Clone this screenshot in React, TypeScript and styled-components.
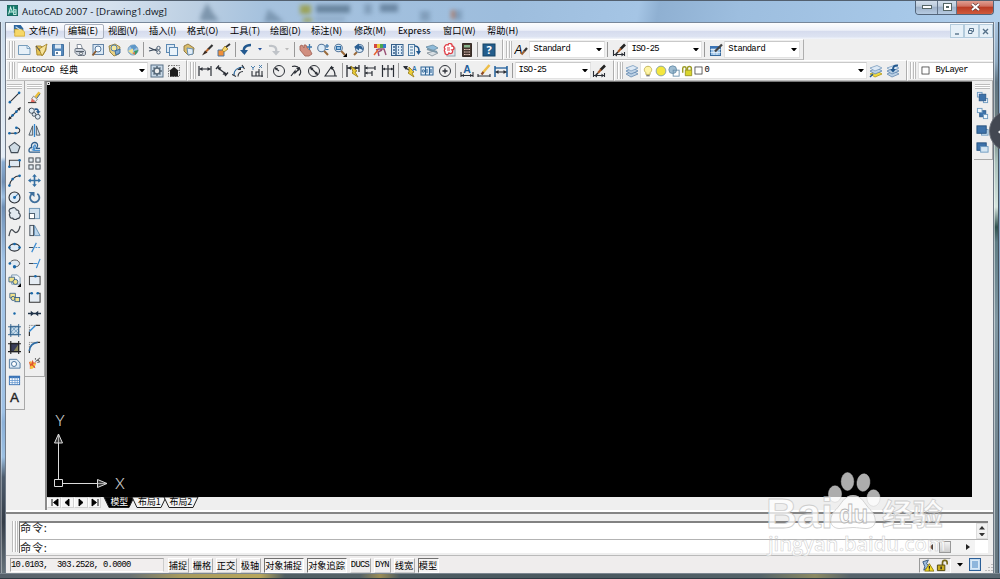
import React from 'react';
import styled, { createGlobalStyle, css } from 'styled-components';

const Global = createGlobalStyle`
  * { box-sizing: border-box; }
  body { margin: 0; background: #9dbbd8; overflow: hidden; }
`;

const SANS = `"Noto Sans", "Noto Sans CJK SC", sans-serif`;
const MONO = `"Liberation Mono", "Noto Sans CJK SC", monospace`;

/* ---------- window frame ---------- */

const Window = styled.div`
  position: relative;
  width: 1000px;
  height: 579px;
  overflow: hidden;
  display: flex;
  flex-direction: column;
  font-family: ${SANS};
  color: #000;
  background: linear-gradient(#9dbcdc 0, #a4c2e0 60px, #a4c2e0 100%);
  border-top: 1px solid #53606f;
`;

const TitleBar = styled.div`
  height: 21px;
  flex: none;
  position: relative;
  display: flex;
  align-items: flex-start;
  padding: 4px 5px 0 7px;
  overflow: hidden;
  background: linear-gradient(100deg, #d3e2f0 0, #d5e1ee 110px, #bdd0e3 190px, #a6c2de 260px, #9dbddd 500px, #a5c5e5 630px, #8fb0d2 650px, #9dbedf 730px, #a7c8e8 900px, #b3d0ec 100%);
`;

const Smudges = styled.svg`
  position: absolute;
  left: 180px;
  top: 0;
  filter: blur(2.2px);
`;

const TitleText = styled.span`
  position: relative;
  margin-left: 4px;
  font: 9.75px/13px "Open Sans", sans-serif;
  color: #10161e;
`;

const CaptionButtons = styled.div`
  display: flex;
  margin: -5px 1px 0 auto;
  height: 15px;
  border: 1px solid #53657a;
  border-top: 0;
  border-radius: 0 0 4px 4px;
  overflow: hidden;
  position: relative;
`;

const CaptionButton = styled.div<{ $w: number; $close?: boolean }>`
  width: ${p => p.$w}px;
  border-right: ${p => (p.$close ? '0' : '1px solid #63758a')};
  background: ${p => (p.$close
    ? 'linear-gradient(#e3a79b 0, #d0705f 45%, #b93b24 50%, #cf5a3c 100%)'
    : 'linear-gradient(#d6e2ee 0, #bccbdc 45%, #9db0c7 50%, #b6cbe2 100%)')};
  display: flex;
  align-items: center;
  justify-content: center;
`;

const Middle = styled.div`
  flex: 1;
  display: flex;
  min-height: 0;
`;

const LeftEdge = styled.div`
  width: 6px;
  flex: none;
  background: linear-gradient(90deg, #5c6470 0 1px, rgba(255,255,255,.35) 1px 2px, transparent 2px 5px, #717b88 5px),
    linear-gradient(#c9daea 0, #dde8f2 90px, #e4edf6 135px, #8aaed4 140px, #7190b5 160px, #9cbfe2 175px, #6e8fb5 185px, #a3c5e8 240px, #9ec1e5 390px, #8cb1d8 400px, #9cc0e2 435px, #4d5c6d 455px, #343c47 500px, #67737b 100%);
`;

const RightEdge = styled.div`
  width: 7px;
  flex: none;
  background: linear-gradient(90deg, #6e7884 0 1px, rgba(255,255,255,.5) 1px 2px, transparent 2px 5px, #46525e 5px 6px, #8ba9ca 6px),
    linear-gradient(#a9c4df 0, #8fabc2 40px, #5f7483 60px, #6f827f 110px, #a9c1bb 140px, #d5e5df 185px, #2e504e 205px, #5f7d85 220px, #8097a2 300px, #71848e 440px, #63747d 100%);
`;

const BottomEdge = styled.div`
  height: 6px;
  flex: none;
  border-top: 1px solid #7c8790;
  border-bottom: 1px solid #2f3942;
  background: linear-gradient(90deg, #56606a 0, #6a7274 130px, #a79a5e 180px, #b8a75c 260px, #4f5d62 285px, #566368 360px, #9a8c55 380px, #4c5b61 400px, #4a5960 600px, #55646a 760px, #8c8a62 815px, #56636b 850px, #5a6871 100%);
`;

const Client = styled.div`
  flex: 1;
  min-width: 0;
  display: flex;
  flex-direction: column;
  background: #efefef;
  border-top: 1px solid #77879a;
`;

/* ---------- menu ---------- */

const MenuBar = styled.div`
  height: 16px;
  flex: none;
  display: flex;
  align-items: center;
  padding-left: 3px;
  background: linear-gradient(#fcfdfe 0, #eef1f9 45%, #d6dcee 52%, #dde3f2 85%, #f3f5fa 100%);
`;

const MenuItem = styled.div<{ $w: number; $hot?: boolean }>`
  position: relative;
  z-index: 0;
  width: ${p => p.$w}px;
  height: 14px;
  flex: none;
  font: 9.2px/13px "Noto Sans CJK SC", sans-serif;
  white-space: nowrap;
  color: #000;
  ${p => p.$hot && css`
    &::before {
      content: '';
      position: absolute;
      z-index: -1;
      left: -4px;
      top: 0;
      width: 38px;
      height: 13px;
      border: 1px solid #a9b0bd;
      border-radius: 2px;
      background: rgba(255, 255, 255, .35);
    }
  `}
`;

const MdiButtons = styled.div`
  margin-left: auto;
  display: flex;
  height: 14px;
`;

const MdiButton = styled.div`
  width: 14.4px;
  border: 1px solid #b3cbdc;
  background: #e6f0f8;
  display: flex;
  align-items: center;
  justify-content: center;
`;

/* ---------- toolbars ---------- */

const ToolRow = styled.div`
  height: 21px;
  flex: none;
  display: flex;
`;

const ToolBar = styled.div<{ $w: number; $open?: boolean }>`
  width: ${p => p.$w}px;
  flex: none;
  display: flex;
  align-items: center;
  overflow: hidden;
  border-top: 1px solid #fff;
  border-left: 1px solid #fff;
  border-right: ${p => (p.$open ? '0' : '1px solid #aeaeae')};
  border-bottom: 1px solid #bdbdbd;
`;

const Grip = styled.div<{ $gap?: number; $h?: number }>`
  width: 6px;
  height: ${p => p.$h ?? 17}px;
  flex: none;
  margin: 0 ${p => p.$gap ?? 2}px 0 2px;
  border: solid #bcbcbc;
  border-width: 0 1px;
  background: linear-gradient(90deg, #fff 0 1px, #efefef 1px 2px, #bcbcbc 2px 3px, #fff 3px);
`;

const Slot = styled.div<{ $w?: number }>`
  width: ${p => p.$w ?? 17.4}px;
  flex: none;
  display: flex;
  align-items: center;
  justify-content: center;
`;

const Sep = styled.div`
  width: 1px;
  height: 15px;
  flex: none;
  margin: 0 1.8px;
  background: #999;
`;

const Combo = styled.div<{ $w: number; $pad?: number }>`
  width: ${p => p.$w}px;
  height: 17px;
  flex: none;
  display: flex;
  align-items: center;
  gap: 1px;
  padding: 0 2px 0 ${p => p.$pad ?? 3}px;
  background: #fff;
  border: 1px solid #e2e2e2;
  border-top-color: #c9c9c9;
  font: 9.1px/14px ${MONO};
  white-space: pre;
`;

const ComboArrow = styled.span`
  margin-left: auto;
  display: flex;
`;

const Latin = styled.span`
  font: 8.8px/13px "Liberation Mono", monospace;
  letter-spacing: -0.68px;
  white-space: pre;
`;

/* ---------- work area ---------- */

const Work = styled.div`
  flex: 1;
  display: flex;
  min-height: 0;
`;

const Palette = styled.div<{ $w: number; $h: number }>`
  width: ${p => p.$w}px;
  height: ${p => p.$h}px;
  flex: none;
  display: flex;
  flex-direction: column;
  align-items: center;
  border-right: 1px solid #a9a9a9;
  border-bottom: 1px solid #a9a9a9;
  padding-right: 1px;
`;

const PaletteGrip = styled.div`
  width: 15px;
  height: 5px;
  flex: none;
  margin: 3px 0 0;
  border: solid #bdbdbd;
  border-width: 1px 0;
  background: linear-gradient(#fff 0 1px, #c4c4c4 1px 2px, #fff 2px);
`;

const PaletteSlot = styled.div`
  height: 16.67px;
  flex: none;
  display: flex;
  align-items: center;
`;

const Document = styled.div`
  width: 928px;
  margin-left: auto;
  display: flex;
  flex-direction: column;
  border-left: 2px solid #8b8b8b;
  border-top: 1px solid #777;
`;

const Canvas = styled.div`
  height: 415px;
  flex: none;
  background: #000;
`;

const LayoutBar = styled.div`
  flex: 1;
  display: flex;
  align-items: flex-start;
`;

const NavButton = styled.div`
  width: 13.6px;
  height: 11px;
  display: flex;
  align-items: center;
  justify-content: center;
  border: 1px solid #d2d2d2;
  border-left-color: #fff;
  background: #f6f6f6;
`;

const LayoutTab = styled.div<{ $w: number; $active?: boolean }>`
  position: relative;
  width: ${p => p.$w}px;
  height: 12px;
  font: 8.9px/10px "Noto Sans CJK SC", sans-serif;
  text-align: center;
  white-space: nowrap;
  color: ${p => (p.$active ? '#fff' : '#000')};
  & > svg { position: absolute; left: -2px; top: 0; }
  & > span { position: relative; }
`;

const RightDock = styled.div`
  width: 21px;
  flex: none;
  padding-left: 2px;
`;

/* ---------- command window & status ---------- */

const CommandArea = styled.div`
  height: 43px;
  flex: none;
  display: flex;
  padding: 7px 5px 2px 4px;
  border-top: 2px solid #858585;
  box-shadow: 0 -2px 0 #fff;
`;

const CommandBox = styled.div`
  flex: 1;
  border-left: 1px solid #777;
  border-top: 2px solid #828282;
  background: #fff;
  display: flex;
  flex-direction: column;
`;

const CommandLine = styled.div<{ $h: number; $rule?: boolean }>`
  height: ${p => p.$h}px;
  display: flex;
  align-items: ${p => (p.$rule ? 'flex-start' : 'center')};
  font: 11.2px/${p => (p.$rule ? 8 : 12)}px "Noto Sans CJK SC", sans-serif;
  border-bottom: ${p => (p.$rule ? '1px solid #b3b3b3' : '0')};
`;

const Prompt = styled.span`
  letter-spacing: 0.7px;
  color: #222;
`;

const VScroll = styled.div`
  width: 12px;
  height: 16px;
  margin-left: auto;
  background: #f1f1f1;
  border: 1px solid #ddd;
  display: flex;
  flex-direction: column;
  justify-content: space-around;
  align-items: center;
`;

const HScroll = styled.div`
  display: flex;
  align-items: center;
  justify-content: space-between;
  width: 46px;
  height: 13px;
  margin: 0 13px 0 auto;
  padding-right: 5px;
  background: #f3f3f3;
`;

const Thumb = styled.div`
  width: 12px;
  height: 12px;
  margin-right: 10px;
  border: 1px solid #999;
  background: linear-gradient(#f4f4f4, #ccc);
`;

const StatusBar = styled.div`
  height: 18px;
  flex: none;
  display: flex;
  align-items: center;
  padding: 1px 0 0 4px;
  background: #efeded;
  border-top: 1px solid #bababa;
`;

const Coords = styled.div`
  width: 154px;
  height: 14px;
  margin-right: 3.5px;
  border: 1px solid #a5a5a5;
  border-right-color: #ccc;
  border-bottom-color: #fff;
  background: #f1eeee;
  display: flex;
`;

const Toggle = styled.div<{ $w: number; $on?: boolean }>`
  width: ${p => p.$w}px;
  height: 15px;
  flex: none;
  margin-right: 3px;
  display: flex;
  justify-content: center;
  font: 9.2px/13px "Noto Sans CJK SC", sans-serif;
  white-space: nowrap;
  border: 1px solid;
  border-color: ${p => (p.$on ? '#707070 #fff #fff #707070' : '#fff #aaa #ccc #fff')};
  background: ${p => (p.$on ? '#f5f4f4' : 'transparent')};
`;

const Tray = styled.div`
  width: 32px;
  height: 15px;
  margin-left: auto;
  display: flex;
  align-items: center;
  justify-content: space-around;
  border: 1px solid #999;
  border-right-color: #fff;
  border-bottom-color: #fff;
`;

const SideHandle = styled.div`
  position: absolute;
  left: 989px;
  top: 109px;
  width: 42px;
  height: 42px;
  border-radius: 50%;
  background: #434852;
  border: 1px solid #6b7079;
`;

const Watermark = styled.svg`
  position: absolute;
  left: 760px;
  top: 464px;
`;

/* ---------- icons (14 × 14 grid) ---------- */

const K = '#2b2f36';
const B = '#2f6fa8';
const line = (d: string, c = K, w = 1.1) => <path d={d} fill="none" stroke={c} strokeWidth={w} />;
const fill = (d: string, c: string, s = 'none') => <path d={d} fill={c} stroke={s} strokeWidth={0.9} />;
const dot = (x: number, y: number, r = 1.4, c = '#1767a9') => <circle cx={x} cy={y} r={r} fill={c} />;
const box = (x: number, y: number, w: number, h: number, f = '#fff', s = B) => (
  <rect x={x} y={y} width={w} height={h} fill={f} stroke={s} strokeWidth={1} />
);
const lens = (c = '#dcebf7') => <><circle cx="5.5" cy="5" r="3.8" fill={c} stroke="#56779b" strokeWidth="1.1" />{line('M8.2 8 12 12', '#9a6a3a', 2)}</>;
const dimline = (y: number) => <>{line(`M1.5 ${y}H12.5`)}{fill(`M1.5 ${y}l3-2v4z M12.5 ${y}l-3-2v4z`, K)}</>;
const sheets = (c: string, s = '#7393b5') => <>
  {fill('M1 10 8 7 13 10 6 13z', c, s)}{fill('M1 7 8 4 13 7 6 10z', '#bcd0e4', '#6a8fb5')}{fill('M1 4 8 1.500 13 4 6 7z', '#dde9f5', '#86a5c4')}
</>;

const ICONS: Record<string, React.ReactNode> = {
  app: <>{box(0.5, 0.5, 13, 13, '#147a6c', '#0e6055')}{line('M2 12 4.500 3 7 9M8.500 2v10h3V6H8.500M2 9h9', '#cdeee6', 1.3)}{line('M2 5 11 10', '#6fd0bb', 0.9)}</>,
  doc: <>{fill('M1 0h8l3 4v5H1z', '#2b66a0')}{fill('M2 5h8l3.500 3v5H2z', '#f6d768', '#d3a72c')}{line('M3 2 9 6', '#c9e1f3', 1.300)}</>,
  new: <>{fill('M1.500 2.500h9l2.500 2.500v6.500H1.500z', '#e6f0f8', '#6a93b5')}{line('M10 2.500v3h3', '#6a93b5', 0.8)}</>,
  open: <>{fill('M2 3h5l1 1h4v3L9 12H3z', '#e6c455', '#a5842a')}{fill('M5 6 13 1 11 8 8 13z', '#f6e39b', '#a5842a')}{line('M2 3 6 8', '#555')}</>,
  save: <>{fill('M1.500 1.500h11v11h-11z', '#5688ba', '#356898')}{fill('M4 1.500h6v4H4z', '#dfeaf4')}{fill('M4 8h6v4.500H4z', '#fff')}{line('M5 10h2', '#357', 1.5)}</>,
  print: <>{fill('M4 1.500h4l1.500 4.500H4.500z', '#fff', '#7d8794')}{fill('M2 6.500q0-1 1-1h6q3 1 3.500 3v3q-1 1.500-3 1H5L2 9.500z', '#d1d8e0', '#5d6875')}{line('M3 8.500h8', '#56606c')}<circle cx="8" cy="10.500" r="1.500" fill="#eee" stroke="#5d6875" /></>,
  preview: <>{box(2, 1.5, 10.500, 10, '#dbe9f5', '#6383a5')}<circle cx="7" cy="6" r="3" fill="#f4faff" stroke="#56779b" />{line('M5 8 1.500 12.500', '#8d5d32', 2)}</>,
  publish: <>{fill('M1 3l6-2 5 3-1 7-5 2-4-4z', '#ebd182', '#8d7d3d')}<circle cx="6" cy="5" r="3" fill="#f3e9a0" stroke="#4f7fb0" />{fill('M7 8l5-2v4l-4 2z', '#7aa6d0', '#356898')}</>,
  dwf: <><circle cx="7" cy="7" r="5" fill="#9cc4e2" stroke="#7fa3c2" />{fill('M4 3 9 1.500l2 3-4 3z', '#5f98c8')}{fill('M8 8l4.500-1-3 5z', '#3b9a62')}{fill('M2 8 7 5.500v6z', '#f2e490')}{fill('M6 10l3-1v3z', '#d07c4a')}</>,
  cut: <>{line('M1 4.500 9 8M1 8 9 6', '#39485a', 1.1)}<circle cx="10.500" cy="5" r="1.700" fill="none" stroke="#4b5f75" /><circle cx="10.500" cy="9.300" r="1.700" fill="none" stroke="#4b5f75" /></>,
  copy: <>{box(1.500, 1.500, 8, 8, '#dce9f5', '#5c89b2')}{box(4.500, 4.500, 8, 8, '#eaf3fa', '#5c89b2')}</>,
  paste: <>{fill('M2 3 6 1l6 4-1 6-5 1-4-4z', '#d9bd6c', '#8c733a')}{fill('M5 5l6 1v5l-5 1z', '#e3eef8', '#5c89b2')}</>,
  brush: <>{line('M12.500 2 8 6.500', '#333', 2.200)}{line('M8.500 6 6 8.500', '#b9652a', 2)}{fill('M2 12.500 5 7.500 7.500 9.500z', '#3a2a20')}</>,
  block: <>{fill('M1 7h6v6H1z', '#ef8f39', '#3f6fa5')}{fill('M5 7l3-4 3 3-4 3z', '#f6d76b', '#a5842a')}{line('M9 4 13 1', '#333', 1.8)}</>,
  undo: <>{line('M12 2C6 2 4 5 5 10', '#23598f', 2.4)}{fill('M1 7h8l-3.500 5z', '#23598f')}</>,
  redo: <>{line('M2 3c6-1 8 2 7 6', '#bfc3c8', 2.200)}{fill('M5 8h8l-4 4.500z', '#bfc3c8')}</>,
  pan: <>{fill('M1 3l2-1 2 3 0-3 2 0 1 3 3 2 2 4-3 2H6L1 7z', '#d18f80', '#a5665a')}{line('M10.500 1v6M8 4h5', '#3f78ac', 1.300)}</>,
  zoomRt: <>{lens()}{line('M9 3h4M11 1v4M9.500 6.500h3', B)}</>,
  zoomWin: <>{lens()}{box(3.5, 3.500, 4, 3, '#9bc2e4')}{fill('M14 10v4h-4z', '#000')}</>,
  zoomPrev: <>{line('M3 12 6 9', '#9a6a3a', 2)}<circle cx="8.500" cy="5.500" r="4" fill="#dcebf7" stroke="#56779b" strokeWidth="1.100" />{fill('M3 4l5-3.500v2q4 0 4 5-2-2-4-2v2z', '#2c6094')}</>,
  props: <>{fill('M1 1h3v4H1z', '#d5483f')}{fill('M4 1h3v4H4z', '#e8c93c')}{fill('M7 1h3v4H7z', '#4aa552')}{fill('M10 1h3v4h-3z', '#3979c9')}{line('M3 7 6 6l5 0 2 6M9 7l-4 2 1 4', '#9a4f75', 1.400)}{line('M1 12l4-5', '#e9622c', 1.500)}</>,
  design: <>{box(1.500, 1.500, 11.500, 11, '#dcebf8', '#355f8a')}{line('M6 1v12M3 4h2M3 7h2M3 10h2M8 4h1M11 4h1M8 7h1M11 7h1M8 10h1M11 10h1', '#355f8a', 1.400)}</>,
  tool: <>{box(1.500, 1.500, 6, 11, '#e6f0f8', '#4b789f')}{line('M3 4h3M3 7h3M3 10h3', '#4b789f')}{line('M8 3c4 0 4 3 4 7', '#23598f', 1.600)}{fill('M9 8h5l-2.500 4z', '#23598f')}</>,
  sheet: <>{fill('M1 4l7-2 5 3-6 3z', '#8fbbd9', '#6d91a8')}{fill('M2 10l7-2 4 2-6 3z', '#d9dfe3', '#88949c')}{line('M2 6l10 3', '#7b97a8', 2)}</>,
  markup: <>{box(5, 5, 8, 8, '#dfe5ea', '#93a1ad')}<path d="M3 3a2 2 0 0 1 3-1 2 2 0 0 1 4 1 2 2 0 0 1 0 4 2 2 0 0 1-3 3 2 2 0 0 1-4-1 2 2 0 0 1 0-3 2 2 0 0 1 0-3z" fill="#fff" stroke="#df3e46" strokeWidth="1.300" />{line('M5 5h3M5 7h3', '#df3e46')}</>,
  calc: <>{fill('M2.500 .5h9v13h-9z', '#45372f', '#291f1a')}{fill('M4 2h6v2.500H4z', '#88b48c')}{line('M4 6.500h6M4 9h6M4 11.500h6', '#e7c6bf', 1.200)}{line('M6 5v8M8 5v8', '#45372f', 0.700)}</>,
  help: <>{box(1, 1, 12, 12, '#235d8c', '#174567')}<text x="7" y="11" textAnchor="middle" fontSize="11" fontWeight="700" fontFamily="Open Sans" fill="#fff">?</text></>,
  textstyle: <><text x="0.5" y="10.5" fontSize="12" fontStyle="italic" fontFamily="Liberation Sans">A</text>{line('M13 5 10 8.500', '#333', 2.200)}{line('M10.500 8 7.500 11.500', '#9b6237', 2)}</>,
  dimstyle: <>{line('M1.500 7v6M12.500 9v4M1 11.500h12', K)}{fill('M2 11.500l3-2v4zM12 11.500l-2.500-2v4z', K)}{line('M13 1.500 8.500 6', '#222', 2.600)}{line('M9 5.500 6 9', '#a45827', 2)}{line('M6 9 4.500 10.500', '#222', 1.500)}</>,
  tablestyle: <>{box(1.500, 3.500, 10, 9, '#9cc3e8', '#376a9e')}{line('M1.500 6.500h10M1.500 9.500h10M5 6v6M8 6v6', '#e7f1fa', 0.800)}{fill('M1 3h11v2.500H1z', '#3a73b5')}{line('M13 1.500 6 8.500', '#444', 2.300)}</>,
  gear: <>{box(1, 1, 12, 12, '#c9d9e7', '#566f85')}{line('M7 2v10M2 7h10M3.500 3.500l7 7M10.500 3.500l-7 7', '#566878', 1.500)}<circle cx="7" cy="7" r="3" fill="#eee" stroke="#566878" strokeWidth="1.600" /></>,
  home: <><rect x="1.500" y="1.500" width="11" height="11" fill="none" stroke="#777" strokeDasharray="1.500 1" />{fill('M2 7l5-4 5 4h-1v5.500H3V7z', '#1d1d1d')}</>,
  dLinear: <>{line('M1 2v10M13 2v10', K, 1.200)}{dimline(5)}</>,
  dAligned: <>{line('M3 4 11 10M1 5l3-3.500M10 12l3-3.500', K, 1.300)}{fill('M3 3l3.500.5-2.500 3zM11 11l-3.500-.5 2.500-3z', K)}</>,
  dArc: <>{line('M2 11C2 6 6 3 12 3', '#1d5f9a', 1.200)}{line('M6 12.500c0-3 2-5 5-5M0 10.500l4 2M10 1l2.500 4', K)}{fill('M5 6l4-3 0 3z', K)}</>,
  dOrd: <>{line('M2 7v5h11M6 12V8h3M9 5v7M12 7v6', K)}{line('M1 2l2 2 2-2M3 4v2M9 1l3 3M12 1 9 4', '#3a73a5', 0.900)}</>,
  dRadius: <><circle cx="7" cy="7" r="5.500" fill="none" stroke={K} />{line('M7 7 3 4', K)}{fill('M2.500 3.500l3.500.5-2 2.500z', K)}</>,
  dJog: <>{line('M3 2.500c7-2 11 5 7 9', K, 1.100)}{line('M2 12l4-5 0 2 5-5', K, 1.200)}{fill('M11 3l-4 1 3 3z', K)}</>,
  dDia: <><circle cx="7" cy="7" r="5.500" fill="none" stroke={K} />{line('M3 3l8 8', K)}{fill('M3 3l3.500 1-2.500 2.500zM11 11l-3.500-1 2.500-2.500z', K)}</>,
  dAng: <>{line('M13 12H1L8 2M7 4c3 1 4 4 4 8', K, 1.200)}{fill('M6 3l4 0-2 3z', K)}</>,
  dQuick: <>{line('M1 1v12M13 1v7M1 4h12', K, 1.300)}{fill('M2 4l3-2v4zM12 4 9 2v4z', K)}{fill('M5 2l6 5-2 1 3 5-6-4 1-1z', '#efcf35', '#98801e')}</>,
  dBase: <>{line('M2 1v12M12 2v4M9 7v5M2 4h10M2 9h7', K, 1.200)}{fill('M2 4l2.500-1.500v3zM2 9l2.500-1.500v3z', K)}</>,
  dCont: <>{line('M1.500 1v12M7 1v12M12.500 1v12M1.500 5h11', K, 1.200)}{fill('M2 5l2-1.500v3zM12 5l-2-1.500v3z', K)}</>,
  leader: <>{line('M1 3l5 3', K, 1.300)}{fill('M0 2l5 0-2 4z', K)}{fill('M6 3l5 5-2 1 2 4-6-4 1-1z', '#efcf35', '#98801e')}<text x="9" y="6.5" fontSize="6.500" fontWeight="700" fontFamily="Liberation Sans" fill={B}>A</text></>,
  tol: <>{box(1, 3, 12, 8, '#e3effa', '#2e6496')}{line('M5.500 3v8M9.500 3v8M11 5v4', '#2e6496')}<circle cx="3.300" cy="7" r="1.200" fill="none" stroke="#2e6496" />{line('M7 5v4', '#2e6496')}</>,
  center: <><circle cx="7" cy="7" r="5.500" fill="none" stroke={K} />{line('M4.500 7h5M7 4.500v5', K, 1.300)}</>,
  dEdit: <><text x="7" y="9" textAnchor="middle" fontSize="10.500" fontWeight="700" fontFamily="Liberation Sans" fill="#1f5f9c">A</text>{line('M1 8v5M13 8v5M1 11.500h12', K)}{fill('M1 11.500l3-1.500v3zM13 11.500l-3-1.500v3z', K)}</>,
  dTextEdit: <>{line('M1 12h12M1 10v3M13 10v3', K)}{line('M12.500 1 6 8.500', '#edbd48', 2.500)}{line('M6.500 8 4.500 10.500', '#8d4925', 2.200)}</>,
  dUpdate: <>{line('M1 2v11M13 2v11', '#1f5f9c', 1.500)}{line('M1 4h12', '#1f5f9c', 1.300)}{dimline(8)}</>,
  layers: sheets('#b9cfe4'),
  layerPrev: <>{sheets('#b9cfe4')}{line('M12 1.500C8 1 7 3 7 6', '#23598f', 2)}{fill('M4 5h6L7 8.500z', '#23598f')}</>,
  layerMake: <>{sheets('#f0d93c', '#b89f22')}{line('M1 13l3-3', '#23598f', 1.500)}</>,
  bulb: <>{fill('M4.500 9C1 6 3 1.500 7 1.500S13 6 9.500 9v2h-5z', '#fff5a6', '#b5a540')}{line('M5 12.500h4', '#777', 1.500)}</>,
  sun: <><circle cx="7" cy="7" r="5.700" fill="#f4e63d" stroke="#7d9cac" /></>,
  vp: <><circle cx="5.500" cy="5.500" r="4.500" fill="#9fbdd2" stroke="#668ca8" />{box(6, 6, 7, 7, 'none', '#668ca8')}</>,
  unlock: <>{line('M2 9V4a2 2 0 0 1 4 0v2', '#9b9b25', 1.700)}{fill('M5 6h7.500v6.500H5z', '#d9d52c', '#8b8717')}{line('M7.500 6V4a2.300 2.300 0 0 1 4.600 0v2', '#9b9b25', 1.700)}</>,
  swatch: box(1.5, 1.500, 11, 11, '#fff', '#111'),
  /* draw palette */
  line: <>{line('M2 12 12 2')}{dot(2, 12)}{dot(12, 2)}</>,
  xline: <>{line('M1 13 13 1')}{fill('M0 14l1.500-4 2.500 2.500zM14 0l-4 1.500L12.500 4z', K)}{dot(5, 9)}{dot(9, 5)}</>,
  pline: <>{line('M1 10h7c6 0 6-6 1-6')}{dot(1.500, 10)}{dot(8, 10)}{dot(9, 4)}</>,
  polygon: <path d="M7 1.500 12.800 6l-2.300 6.500h-7L1.200 6z" fill="#cfdbe4" stroke="#414b55" strokeWidth="1.200" />,
  rect: <>{box(1.500, 3.500, 11, 7, '#dfe9f2', '#333')}{dot(1.500, 10.500)}{dot(12.500, 3.500)}</>,
  arc: <>{line('M1.500 12.500C2 7 7 2 12.500 2')}{dot(1.500, 12.500)}{dot(5, 5.500)}{dot(12.500, 2)}</>,
  circle: <><circle cx="7" cy="7" r="5.900" fill="#e0ebf5" stroke={K} strokeWidth="1.200" />{line('M7 7l3.500-3.500', B)}{dot(7, 7, 1.600)}</>,
  cloud: <path d="M2.500 6.500A2.700 2.700 0 0 1 4 1.500a3 3 0 0 1 5 1.500 2.500 2.500 0 0 1 2.500 3.500 3.200 3.200 0 0 1-1.500 6A3 3 0 0 1 5 12a2.300 2.300 0 0 1-3-2.500 2 2 0 0 1 .5-3z" fill="#e2eaf1" stroke="#3f4954" strokeWidth="1.300" />,
  spline: line('M1 13C3 3 5 6 6.500 8s5 2 6.500-6', '#454b52', 1.300),
  ellipse: <><ellipse cx="7" cy="7" rx="5.500" ry="3.800" fill="#e0ebf5" stroke={K} strokeWidth="1.300" />{dot(1.500, 7)}{dot(12.500, 7)}{dot(7, 3.200)}</>,
  ellArc: <>{fill('M2 7C3 2 12 2 12.500 7 12 10 10 10.500 7 10.500', '#dfe9f2', '#444')}{dot(2, 7)}{dot(7, 10.500, 1.800)}</>,
  insBlock: <>{fill('M4 1h6l3 3v7H4z', '#eef4f9', '#6a8aa8')}{fill('M1 3.500h6v5H1z', '#f0e28b', '#38628a')}<circle cx="8" cy="8.500" r="2.700" fill="#f0e28b" stroke="#38628a" />{fill('M14 10v4h-4z', '#000')}</>,
  mkBlock: <>{fill('M2 2.500h6v5H2z', '#f0e28b', '#38628a')}<circle cx="5.500" cy="8" r="2.200" fill="#f0e28b" stroke="#38628a" />{box(7.500, 7, 5, 4.500, '#f0e28b', '#38628a')}</>,
  point: dot(7, 7, 1.300),
  hatch: <>{box(2.500, 2.500, 9, 9, '#c9dceb', '#35648f')}{line('M2 6l4-4M2 10l8-8M4 12l8-8M8 12l4-4M3 8l4 4M5 4l6 6', '#6493b8', 0.800)}{line('M0 3h14M0 11.500h14M3 0v14M11.500 0v14', '#35648f', 1)}</>,
  gradient: <>{box(2.500, 2.500, 9, 9, '#3a3d59', '#222')}{fill('M6 11l5-7v7z', '#8b8757')}{line('M0 3h14M0 11.500h14M3 0v14M11.500 0v14', '#222', 1.200)}</>,
  region: <>{fill('M1.500 2.500h8l3.500 4v5.500H1.500z', '#dceaf5', '#3e6b95')}<circle cx="6.500" cy="7.500" r="2.700" fill="#fff" stroke="#3e6b95" /></>,
  table: <>{box(1.500, 2.500, 11, 9, '#fff', '#3a73b5')}{fill('M1 2h12v2.500H1z', '#3a73b5')}{line('M1 7h12M1 9.300h12M4.500 3v8M7.500 3v8M10 3v8', '#5e93cd', 0.800)}</>,
  mtext: <text x="7" y="12" textAnchor="middle" fontSize="14.500" fontFamily="Liberation Sans" fill="#222" stroke="#222" strokeWidth=".4">A</text>,
  /* modify palette */
  erase: <>{line('M12.500 1.500 8 7', '#e9bd3c', 3)}{line('M13 3 9.500 8', '#3568a0', 1)}{fill('M6 5.500l4 3.500-2 2.500-4-3z', '#f3f3f3', '#777')}{fill('M4 8l3.500 3-1 1.500H3z', '#e4685e')}{line('M0 12.500h9', '#333')}</>,
  dup: <><circle cx="4" cy="4" r="2.800" fill="#dfe9f2" stroke="#3d4b5a" /><circle cx="6.500" cy="8" r="2" fill="#dfe9f2" stroke="#3d4b5a" /><circle cx="10.500" cy="10.500" r="2.600" fill="#dfe9f2" stroke="#3d4b5a" />{line('M7 2.500c4-1 4 1 4 3', '#23598f', 1.800)}{fill('M8.500 4.500H13.500L11 7.500z', '#23598f')}</>,
  mirror: <>{fill('M5 2v10H1z', '#d5dfe7', '#3f4a55')}{fill('M9 2v10h4z', '#d5dfe7', '#3f4a55')}{line('M7 0v14', '#2f86d0', 1.400)}</>,
  offset: <>{line('M1.500 12h11.500M1.500 12C0 8 3 7 4 7 2 0 12 0 10 6l-1 2h4', '#2e5d8a', 1.400)}{line('M4 9.500h2C5 4 8.500 3 8 5.500L6.500 10H13', '#4a93d3', 1.300)}</>,
  array: <>{box(1, 1, 4.500, 4.500, '#e4ecf2', '#3c444d')}{box(8.500, 1, 4.500, 4.500, '#e4ecf2', '#3c444d')}{box(1, 8.500, 4.500, 4.500, '#e4ecf2', '#3c444d')}{box(8.500, 8.500, 4.500, 4.500, '#e4ecf2', '#3c444d')}</>,
  move: <>{line('M7 2v10M2 7h10', '#346fa2', 1.700)}{fill('M7 0l2.500 3h-5zM7 14l2.500-3h-5zM0 7l3-2.500v5zM14 7l-3-2.500v5z', '#346fa2')}</>,
  rotate: <>{line('M4.500 3a5 5 0 1 0 5.500 0', '#3f6f9c', 2)}{fill('M0.500 1h6.500v5.500z', '#3f6f9c')}</>,
  scale: <>{box(1.500, 1.500, 11, 11, '#cfe0ee', '#6b93b5')}{box(1.500, 7, 5.500, 5.500, '#fff', '#44596b')}</>,
  stretch: <>{box(2, 1.500, 4, 11, '#e3eaf0', '#3f4a55')}{fill('M7 1.500 13 12.500H7z', '#bcd6ec', '#5a87ad')}</>,
  trim: <>{line('M1 7h5', '#3f4a55')}{line('M4 12 9 2', '#3a8ad0', 1.300)}<path d="M8 7h6" stroke="#3a8ad0" strokeDasharray="2 1" /></>,
  extend: <>{line('M1 7h5', '#3f4a55')}{line('M6 7h4', '#3a8ad0')}{line('M9 12l4-10', '#3a8ad0', 1.300)}</>,
  breakPt: <>{box(1.500, 2.500, 11.500, 9, '#e5ecf3', '#333')}{dot(8, 2.500)}</>,
  breakIt: <>{fill('M1.500 2.500v9.500H13V2.500', '#e5ecf3')}{line('M4 2.500H1.500v9.500H13V2.500h-2.500', '#333')}{dot(4, 2.500)}{dot(10.500, 2.500)}</>,
  join: <>{line('M0 7h14', '#1f3248', 1.600)}{fill('M6.500 7 3 4v6zM7.500 7 11 4v6z', '#1f3248')}</>,
  chamfer: <>{line('M1.500 13V8M8 1.500h5', '#333', 1.300)}{line('M1.500 8 8 1.500', '#2e86d0', 1.500)}<path d="M1.500 7V1.500H8" fill="none" stroke="#777" strokeDasharray="1.500 1" /></>,
  fillet: <>{line('M1.500 13V10M10 1.500h3', '#333', 1.300)}{line('M1.500 10.500C2 5 5 2 10.500 1.500', '#2e6ca5', 1.900)}<path d="M1.500 7V1.500H7" fill="none" stroke="#777" strokeDasharray="1.500 1" /></>,
  explode: <>{fill('M1 5l3 1 1-3 1 3 3 0-2 3 1 3-3-1-3 2 0-4z', '#e2522e')}{dot(4, 11, 1.800, '#f3c73c')}{dot(3, 6, 1.300, '#f3a93c')}{dot(7, 8, 1.400, '#f3c73c')}{line('M8 5l5-4M10 6l3-1M8 3V1M11 2l1 3', '#666')}</>,
  /* draw order */
  front: <>{box(1.500, 1.500, 5, 5, '#eef', '#6f9bc0')}{box(8, 8, 4.500, 4.500, '#fff', '#6f9bc0')}{box(3.500, 3.500, 7, 7, '#3d72aa', '#2f5d8c')}</>,
  back: <>{box(4, 4, 6.500, 6.500, '#3d72aa', '#2f5d8c')}{box(1.500, 1.500, 5, 4.500, '#eef5fb', '#6f9bc0')}{box(8, 8, 4.500, 4.500, '#eef5fb', '#6f9bc0')}</>,
  above: <>{box(6, 6, 7, 6, '#d5e6f3', '#6f9bc0')}{box(1, 2, 10, 8, '#3d72aa', '#25527f')}</>,
  under: <>{box(1, 2, 10, 8, '#3d72aa', '#25527f')}{box(5, 6, 8, 6, '#d5e6f3', '#6f9bc0')}</>,
};

const Icon = ({ n, s = 14 }: { n: string; s?: number }) => (
  <svg width={s} height={s} viewBox="0 0 14 14" style={{ flex: 'none' }}>{ICONS[n]}</svg>
);

const Arrow = ({ c = '#000', s = 6 }: { c?: string; s?: number }) => (
  <svg width={s} height={s / 2 + 0.5} viewBox="0 0 6 3.5"><path d="M0 0h6L3 3.500z" fill={c} /></svg>
);

const Drop = () => <ComboArrow><Arrow /></ComboArrow>;

const Tools = ({ list }: { list: string }) => (
  <>
    {list.split(' ').map((n, i) => {
      if (n === '|') return <Sep key={i} />;
      if (n === 'v' || n === 'w') return <Slot key={i} $w={10}><Arrow s={4} c={n === 'v' ? '#24519a' : '#bbb'} /></Slot>;
      return <Slot key={i}><Icon n={n} /></Slot>;
    })}
  </>
);

const PaletteTools = ({ list }: { list: string }) => (
  <>
    <PaletteGrip />
    {list.split(' ').map(n => <PaletteSlot key={n}><Icon n={n} s={13} /></PaletteSlot>)}
  </>
);

const MENUS: [string, number][] = [
  ['文件(F)', 39], ['编辑(E)', 40], ['视图(V)', 41], ['插入(I)', 38], ['格式(O)', 43], ['工具(T)', 40],
  ['绘图(D)', 41], ['标注(N)', 43], ['修改(M)', 44], ['Express', 45], ['窗口(W)', 44], ['帮助(H)', 40],
];

const TOGGLES: [string, number, boolean][] = [
  ['捕捉', 21, false], ['栅格', 21, false], ['正交', 21, false], ['极轴', 21, false],
  ['对象捕捉', 40, true], ['对象追踪', 40, true], ['DUCS', 21, false], ['DYN', 17, false], ['线宽', 21, false], ['模型', 21, true],
];

const NAV = ['M3 1v7M9 1v7L4.500 4.500z', 'M7 1v7L3 4.500z', 'M3 1v7l4-3.500z', 'M8 1v7M2 1v7l4.500-3.500z'];

const Ucs = () => (
  <svg width="100" height="415" viewBox="47 82 100 415">
    <g fill="none" stroke="#dcdcdc">
      <rect x="47.500" y="82.500" width="2" height="2" />
      <path d="M54.500 479.500h8v7h-8zM58.500 479V434M63 483.500h44" />
      <path d="M58.500 434l-4 9h8zM107 483.500l-9.500-4v8z" fill="#777" fillOpacity=".5" />
    </g>
    <g fill="#d4d4d4" fontFamily="Lato" fontWeight="300" fontSize="15" textAnchor="middle" stroke="#d4d4d4" strokeWidth=".2">
      <text x="60" y="426">Y</text>
      <text x="120" y="488.500">X</text>
    </g>
  </svg>
);

const TabShape = ({ w, active }: { w: number; active?: boolean }) => (
  <svg width={w + 6} height="12">
    <path d={`M1 0 6 10.500H${w - 1}L${w + 4} 0z`} fill={active ? '#000' : '#f4f4f4'} stroke="#222" />
  </svg>
);

export default function App() {
  return (
    <Window>
      <Global />
      <TitleBar>
        <Smudges width="320" height="21">
          <g fill="#56718b">
            <path d="M21 14l6-12 6 10 6 8H20z" opacity=".6" />
            <path d="M88 8l8 6 8 7H84z" opacity=".5" />
            <rect x="136" y="4" width="34" height="8" opacity=".75" />
            <rect x="200" y="3" width="18" height="8" opacity=".7" />
            <path d="M184 3h8v10h-8zM240 10h10v10h-10zM275 9h7v10h-7z" opacity=".4" />
            <rect x="135" y="16" width="30" height="4" opacity=".3" />
          </g>
          <path d="M120 4h11v9h-11zM123 17h9v4h-9z" fill="#9aa04c" opacity=".9" />
          <path d="M271 9h4v9h-4z" fill="#b06a4a" opacity=".7" />
        </Smudges>
        <Icon n="app" s={11} />
        <TitleText>AutoCAD 2007 - [Drawing1.dwg]</TitleText>
        <CaptionButtons>
          <CaptionButton $w={22}><svg width="10" height="4"><rect x=".5" y=".5" width="9" height="3" fill="#fff" stroke="#566" /></svg></CaptionButton>
          <CaptionButton $w={19}><svg width="9" height="8"><rect x=".5" y=".5" width="8" height="7" fill="#fff" stroke="#566" /><rect x="3" y="3" width="3" height="2" fill="#566" /></svg></CaptionButton>
          <CaptionButton $w={36} $close>
            <svg width="9" height="8" viewBox="0 0 9 8"><path d="M1 1l7 6M8 1 1 7" stroke="#5d3a3a" strokeWidth="3.200" /><path d="M1 1l7 6M8 1 1 7" stroke="#fff" strokeWidth="1.900" /></svg>
          </CaptionButton>
        </CaptionButtons>
      </TitleBar>

      <Middle>
        <LeftEdge />
        <Client>
          <MenuBar>
            <Slot $w={20}><Icon n="doc" s={12} /></Slot>
            {MENUS.map(([t, w], i) => <MenuItem key={t} $w={w} $hot={i === 1}>{t}</MenuItem>)}
            <MdiButtons>
              <MdiButton><svg width="6" height="7"><path d="M1 6h4" stroke="#55718a" strokeWidth="1.400" /></svg></MdiButton>
              <MdiButton><svg width="8" height="8"><path d="M2.500 3V1.500h4v3H5M1.500 3.500h3.500v3H1.500z" fill="none" stroke="#55718a" /></svg></MdiButton>
              <MdiButton><svg width="7" height="7"><path d="M1 1l5 5M6 1 1 6" stroke="#55718a" strokeWidth="1.400" /></svg></MdiButton>
            </MdiButtons>
          </MenuBar>

          <ToolRow>
            <ToolBar $w={497}>
              <Grip $gap={0} />
              <Tools list="new open save | print preview publish dwf | cut copy paste brush block | undo v redo w | pan zoomRt zoomWin zoomPrev | props design tool sheet markup calc | help" />
            </ToolBar>
            <ToolBar $w={301}>
              <Grip $gap={0} />
              <Slot><Icon n="textstyle" /></Slot>
              <Combo $w={76}><Latin>Standard</Latin><Drop /></Combo>
              <Sep />
              <Slot><Icon n="dimstyle" /></Slot>
              <Combo $w={75}><Latin>ISO-25</Latin><Drop /></Combo>
              <Sep />
              <Slot><Icon n="tablestyle" /></Slot>
              <Combo $w={76}><Latin>Standard</Latin><Drop /></Combo>
            </ToolBar>
          </ToolRow>
          <ToolRow>
            <ToolBar $w={181}>
              <Grip />
              <Combo $w={131} $pad={4}><Latin>AutoCAD </Latin>经典<Drop /></Combo>
              <Tools list="gear home" />
            </ToolBar>
            <ToolBar $w={427}>
              <Grip $gap={0} />
              <Tools list="dLinear dAligned dArc dOrd | dRadius dJog dDia dAng | dQuick dBase dCont | leader tol center | dEdit dTextEdit dUpdate |" />
              <Combo $w={76}><Latin>ISO-25</Latin><Drop /></Combo>
              <Slot><Icon n="dimstyle" /></Slot>
            </ToolBar>
            <ToolBar $w={293}>
              <Grip $gap={0} />
              <Slot><Icon n="layers" /></Slot>
              <Combo $w={227} $pad={1}>
                <Icon n="bulb" s={12} /><Icon n="sun" s={12} /><Icon n="vp" s={12} /><Icon n="unlock" s={12} /><Icon n="swatch" s={9} />
                <Latin>0</Latin><Drop />
              </Combo>
              <Tools list="layerMake layerPrev" />
            </ToolBar>
            <ToolBar $w={86} $open>
              <Grip />
              <Combo $w={76} $pad={2}><Icon n="swatch" s={9} /><Latin> ByLayer</Latin></Combo>
            </ToolBar>
          </ToolRow>

          <Work>
            <Palette $w={19} $h={329}>
              <PaletteTools list="line xline pline polygon rect arc circle cloud spline ellipse ellArc insBlock mkBlock point hatch gradient region table mtext" />
            </Palette>
            <Palette $w={20} $h={296}>
              <PaletteTools list="erase dup mirror offset array move rotate scale stretch trim extend breakPt breakIt join chamfer fillet explode" />
            </Palette>
            <Document>
              <Canvas><Ucs /></Canvas>
              <LayoutBar>
                {NAV.map(d => (
                  <NavButton key={d}><svg width="10" height="9"><path d={d} fill="#000" stroke="#000" strokeWidth=".9" /></svg></NavButton>
                ))}
                <Slot $w={4} />
                <LayoutTab $w={28} $active><TabShape w={27} active /><span>模型</span></LayoutTab>
                <LayoutTab $w={32}><TabShape w={31} /><span>布局1</span></LayoutTab>
                <LayoutTab $w={31}><TabShape w={31} /><span>布局2</span></LayoutTab>
              </LayoutBar>
            </Document>
            <RightDock>
              <Palette $w={19} $h={79}><PaletteTools list="front back above under" /></Palette>
            </RightDock>
          </Work>

          <CommandArea>
            <Grip $gap={1} $h={31} />
            <CommandBox>
              <CommandLine $h={17} $rule><Prompt>命令:</Prompt>
                <VScroll><svg width="6" height="4"><path d="M0 3.500h6L3 0z" fill="#333" /></svg><Arrow c="#333" /></VScroll>
              </CommandLine>
              <CommandLine $h={14}><Prompt>命令:</Prompt>
                <HScroll>
                  <svg width="4" height="6"><path d="M4 0v6L0 3z" fill="#444" /></svg>
                  <Thumb />
                  <svg width="4" height="6"><path d="M0 0v6l4-3z" fill="#222" /></svg>
                </HScroll>
              </CommandLine>
            </CommandBox>
          </CommandArea>

          <StatusBar>
            <Coords><Latin>{'10.0103,  303.2528, 0.0000'}</Latin></Coords>
            {TOGGLES.map(([t, w, on]) => (
              <Toggle key={t} $w={w} $on={on}>{/^[A-Z]/.test(t) ? <Latin>{t}</Latin> : t}</Toggle>
            ))}
            <Tray>
              <svg width="13" height="13" viewBox="0 0 14 14">
                <path d="M2 3l6-2-2 4 3 3-6 4 1-4z" fill="#9dbbdc" stroke="#34557e" />
                <path d="M9 5l5 8H4z" fill="#f4da26" stroke="#8f7c13" /><path d="M9 7.500v3M9 11.300v1" stroke="#222" strokeWidth="1.300" />
              </svg>
              <svg width="13" height="13" viewBox="0 0 14 14">
                <path d="M7 7V4a2.500 2.500 0 0 1 5 0v2" fill="none" stroke="#77691a" strokeWidth="1.800" />
                <path d="M1.500 6.500h8v6h-8z" fill="#c9ad1e" stroke="#4f440c" /><path d="M5.500 8v3" stroke="#222" strokeWidth="1.500" />
              </svg>
            </Tray>
            <Slot $w={17}><Arrow /></Slot>
            <svg width="25" height="15">
              <rect x="1.500" y="0.500" width="11" height="12" fill="#c2daf0" stroke="#2c5f97" />
              <rect x="3.500" y="2.500" width="7" height="8" fill="#8eb6dc" stroke="#d9e9f6" />
              <path d="M24 6v1M24 9v1M24 12v1M21 9v1M21 12v1M18 12v1" stroke="#aaa" strokeWidth="1.500" />
            </svg>
          </StatusBar>
        </Client>
        <RightEdge />
      </Middle>
      <BottomEdge />

      <SideHandle>
        <svg width="11" height="40"><path d="M11 19 8.500 21l2.500 2" fill="#fff" stroke="#fff" strokeWidth=".8" /></svg>
      </SideHandle>

      <Watermark width="195" height="100" viewBox="760 465 195 100">
        <g fill="#fff" fillOpacity=".68" stroke="#c9c9c9" strokeOpacity=".5" strokeWidth=".8">
          <ellipse cx="847.500" cy="481.500" rx="6.300" ry="9" />
          <ellipse cx="863.500" cy="482.500" rx="6.500" ry="8.800" transform="rotate(8 863 482)" />
          <ellipse cx="835" cy="494" rx="6.600" ry="8.300" />
          <ellipse cx="873.500" cy="498" rx="6.600" ry="8.300" />
          <path d="M853 495.500c9 0 11 8 17 14 6 5 9 18-3 19-6 0-9-1-14-1s-9 1-14 1c-12-1-9-14-3-19 6-6 8-14 17-14z" strokeOpacity="1" />
        </g>
        <g fill="#fff" fillOpacity=".75" stroke="#cdcdcd" strokeWidth=".8" fontFamily="Liberation Sans, Noto Sans CJK SC">
          <text x="766" y="528" fontSize="42" fontWeight="700" textLength="67" lengthAdjust="spacingAndGlyphs">Bai</text>
          <text x="839" y="523" fontSize="26" fontWeight="700" textLength="29" lengthAdjust="spacingAndGlyphs" stroke="#b5b5b5">du</text>
          <text x="882" y="525" fontSize="30" fontWeight="700" textLength="61" lengthAdjust="spacingAndGlyphs">经验</text>
          <text x="768" y="551" fontSize="19" fontFamily="Open Sans" fontWeight="600" textLength="178" lengthAdjust="spacingAndGlyphs" strokeWidth=".5">jingyan.baidu.com</text>
        </g>
      </Watermark>
    </Window>
  );
}
